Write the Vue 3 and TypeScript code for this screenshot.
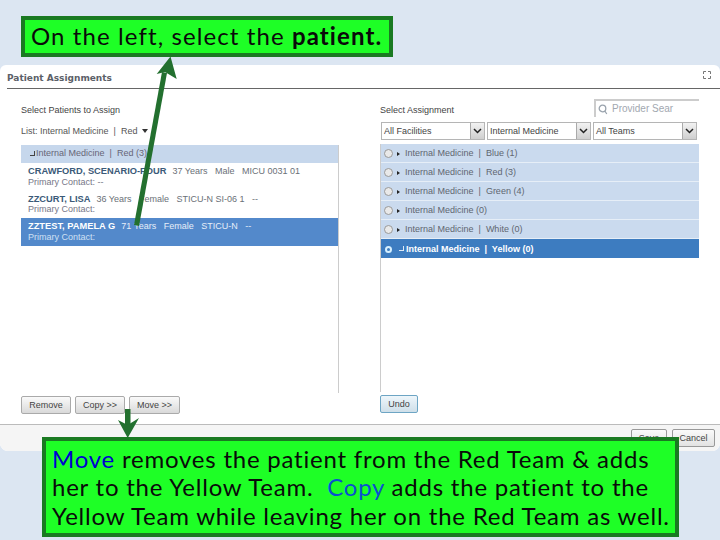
<script setup lang="ts">
const leftRows = [
  { name: 'CRAWFORD, SCENARIO-FOUR', info: '37 Years   Male   MICU 0031 01', contact: 'Primary Contact: --', selected: false },
  { name: 'ZZCURT, LISA', info: '36 Years   Female   STICU-N SI-06 1   --', contact: 'Primary Contact:', selected: false },
  { name: 'ZZTEST, PAMELA G', info: '71 Years   Female   STICU-N   --', contact: 'Primary Contact:', selected: true },
]
const teams = [
  { label: 'Internal Medicine  |  Blue (1)', on: false },
  { label: 'Internal Medicine  |  Red (3)', on: false },
  { label: 'Internal Medicine  |  Green (4)', on: false },
  { label: 'Internal Medicine (0)', on: false },
  { label: 'Internal Medicine  |  White (0)', on: false },
  { label: 'Internal Medicine  |  Yellow (0)', on: true },
]
const selects = ['All Facilities', 'Internal Medicine', 'All Teams']
</script>

<template>
  <div class="slide">
    <section class="dialog">
      <header class="title-bar">
        <h1>Patient Assignments</h1>
        <svg class="expand" width="8" height="8" viewBox="0 0 8 8" fill="none" stroke="#777" stroke-width="1">
          <path d="M.5 3V.5H3M5 .5h2.500V3M7.500 5v2.500H5M3 7.500H.5V5" />
        </svg>
      </header>
      <div class="columns">
        <div class="col left">
          <div class="label-row">Select Patients to Assign</div>
          <div class="list-line">List: Internal Medicine &nbsp;|&nbsp; Red <span class="caret"></span></div>
          <div class="left-list">
            <div class="group-head"><span class="open-mark"></span>Internal Medicine &nbsp;|&nbsp; Red (3)</div>
            <div v-for="r in leftRows" :key="r.name" class="patient" :class="{ selected: r.selected }">
              <div><b>{{ r.name }}</b><span class="info">{{ r.info }}</span></div>
              <div class="contact">{{ r.contact }}</div>
            </div>
          </div>
          <div class="buttons">
            <button>Remove</button>
            <button>Copy &gt;&gt;</button>
            <button>Move &gt;&gt;</button>
          </div>
        </div>
        <div class="col right">
          <div class="label-row search-row">
            <span>Select Assignment</span>
            <div class="search">
              <svg width="10" height="11" viewBox="0 0 10 11" fill="none" stroke="#9aa3ad" stroke-width="1.300">
                <circle cx="4.500" cy="4.500" r="3.300" />
                <path d="M6.800 7l2 3" />
              </svg>
              <span>Provider Sear</span>
            </div>
          </div>
          <div class="selects">
            <div v-for="s in selects" :key="s" class="select">
              <span>{{ s }}</span>
              <i class="chev">
                <svg width="9" height="6" viewBox="0 0 9 6" fill="none" stroke="#222" stroke-width="1.500">
                  <path d="M1 1l3.500 3.500L8 1" />
                </svg>
              </i>
            </div>
          </div>
          <div class="right-list">
            <div v-for="t in teams" :key="t.label" class="team" :class="{ on: t.on }">
              <span class="radio"></span>
              <span :class="t.on ? 'open-mark light' : 'arrow'"></span>
              <span class="team-label">{{ t.label }}</span>
            </div>
          </div>
          <div class="buttons">
            <button class="undo">Undo</button>
          </div>
        </div>
      </div>
      <footer class="foot">
        <button>Save</button>
        <button>Cancel</button>
      </footer>
    </section>

    <div class="callout top">On the left, select the <b>patient.</b></div>
    <div class="callout bottom">
      <span class="move">Move</span> removes the patient from the Red Team &amp; adds<br />
      her to the Yellow Team. &nbsp;<span class="copy">Copy</span> adds the patient to the<br />
      Yellow Team while leaving her on the Red Team as well.
    </div>

    <svg class="arrows" width="720" height="540" viewBox="0 0 720 540">
      <g fill="#23702f">
        <path d="M134 225L162 72l5 1L139 226z" />
        <path d="M170.500 56.500L176.700 79 165 72 156.700 74z" />
        <rect x="125" y="409" width="5.500" height="17" />
        <path d="M127.700 438L118 420 127.700 425 139 418z" />
      </g>
    </svg>
  </div>
</template>

<style>
html, body { margin: 0; background: #dce6f2; }
</style>

<style scoped>
.slide {
  position: relative;
  width: 720px;
  height: 540px;
  padding-top: 65px;
  box-sizing: border-box;
  overflow: hidden;
  background: #dce6f2;
  font-family: "Liberation Sans", sans-serif;
  color: #4a4f55;
}
.dialog {
  height: 386px;
  background: #fff;
  border-radius: 6px 6px 8px 8px;
  display: flex;
  flex-direction: column;
}
.title-bar {
  height: 24px;
  margin-left: 7px;
  border-bottom: 1px solid #666;
  display: flex;
  align-items: center;
  justify-content: space-between;
  padding-right: 9px;
  padding-top: 2px;
  box-sizing: border-box;
}
h1 { margin: 0; font: 700 9px "DejaVu Sans", sans-serif; color: #5b6068; }
.expand { margin-top: -5px; }
.columns {
  flex: 1;
  display: flex;
  padding: 11px 21px 0 21px;
}
.col { display: flex; flex-direction: column; }
.left { width: 359px; }
.right { width: 319px; }
.label-row {
  height: 22px;
  font-size: 9px;
  line-height: 20px;
  color: #444;
}
.list-line {
  height: 23px;
  font-size: 9px;
  line-height: 19px;
  color: #555;
}
.caret {
  display: inline-block;
  margin-left: 2px;
  border: 3px solid transparent;
  border-top: 4px solid #333;
  border-bottom: 0;
  vertical-align: 1px;
}
.left-list {
  width: 318px;
  height: 248px;
  border-right: 1px solid #ccc;
  box-sizing: border-box;
  font-size: 9px;
}
.group-head {
  height: 18px;
  line-height: 17px;
  background: #c6d7ec;
  padding-left: 9px;
  color: #667;
}
.open-mark {
  display: inline-block;
  width: 4px;
  height: 4px;
  margin-right: 1px;
  border-right: 1px solid #444;
  border-bottom: 1px solid #444;
}
.open-mark.light { border-color: #dfe9f5; margin: 0 2px 0 3px; }
.patient {
  height: 27.500px;
  padding: 3px 7px 0;
  box-sizing: border-box;
  line-height: 10.500px;
  white-space: pre;
}
.patient b { color: #3b5a78; font-weight: 700; font-size: 9.300px; }
.info { margin-left: 6px; color: #6a7077; }
.contact { color: #778; }
.patient.selected { background: #5389cb; }
.patient.selected b { color: #fff; }
.patient.selected .info { color: #e6eef8; }
.patient.selected .contact { color: #cfe0f3; }
.buttons { display: flex; gap: 4px; margin-top: 3px; }
button {
  height: 18px;
  padding: 0;
  font: 9px "Liberation Sans", sans-serif;
  color: #444;
  background: linear-gradient(#fafafa, #d9d9d9);
  border: 1px solid #aaa;
  border-radius: 2px;
}
.left .buttons button:nth-child(1) { width: 50px; }
.left .buttons button:nth-child(2) { width: 50px; }
.left .buttons button:nth-child(3) { width: 51px; }
.undo { width: 38px; border-color: #6da5c4; background: linear-gradient(#eef6fb, #cfdfe9); }
.search-row { display: flex; justify-content: space-between; align-items: flex-start; height: 22px; }
.search {
  width: 105px;
  height: 18px;
  margin-top: -1px;
  box-sizing: border-box;
  border-top: 2px solid #ccc;
  border-left: 2px solid #ccc;
  display: flex;
  align-items: center;
  gap: 4px;
  padding-left: 2px;
  font-size: 10px;
  line-height: 14px;
  color: #a2a8b0;
}
.selects { display: flex; gap: 2px; height: 22px; padding-left: 1px; }
.select {
  width: 104px;
  height: 18px;
  box-sizing: border-box;
  border: 1px solid #b5b5b5;
  display: flex;
  justify-content: space-between;
  align-items: center;
  padding-left: 2px;
  font-size: 9px;
  color: #444;
}
.chev {
  width: 13px;
  height: 16px;
  background: linear-gradient(#f2f2f2, #cfcfcf);
  border-left: 1px solid #aaa;
  display: flex;
  align-items: center;
  justify-content: center;
}
.right-list {
  height: 248px;
  border-left: 1px solid #ccc;
  box-sizing: border-box;
  font-size: 9px;
}
.team {
  height: 19px;
  box-sizing: border-box;
  border-bottom: 1px solid #e6eef7;
  background: #cadaee;
  display: flex;
  align-items: center;
  color: #5f6670;
  white-space: pre;
}
.team.on { background: #3d7cc0; border-bottom: 0; color: #fff; font-weight: 700; }
.radio {
  width: 9px;
  height: 9px;
  margin: 1px 3px 0 3px;
  box-sizing: border-box;
  border: 1px solid #999;
  border-radius: 50%;
  background: #e9e9e9;
}
.team.on .radio { width: 7px; height: 7px; margin: 1px 4px 0 4px; border: 2px solid #d6f0ff; background: #3d7cc0; }
.arrow {
  width: 0;
  height: 0;
  margin: 1px 5px 0 1px;
  border-left: 3px solid #222;
  border-top: 2.500px solid transparent;
  border-bottom: 2.500px solid transparent;
}
.foot {
  height: 27px;
  box-sizing: border-box;
  border-top: 1px solid #bbb;
  background: #f5f5f5;
  border-radius: 0 0 8px 8px;
  display: flex;
  justify-content: flex-end;
  gap: 5px;
  padding: 4px 5px 0 0;
}
.foot button { background: linear-gradient(#fafafa, #e2e2e2); border-color: #999; }
.foot button:first-child { width: 36px; }
.foot button:last-child { width: 43px; }

.callout {
  position: absolute;
  box-sizing: border-box;
  background: #1eff26;
  border: 4px solid #1a7a22;
  color: #0a0a0a;
  font-family: "Lato", sans-serif;
}
.top {
  left: 21px;
  top: 16px;
  width: 372px;
  height: 41px;
  padding-left: 6px;
  font-size: 24px;
  line-height: 32px;
  letter-spacing: 1.100px;
  white-space: nowrap;
}
.bottom {
  left: 42px;
  top: 437px;
  width: 637px;
  height: 100px;
  padding: 4px 0 0 6px;
  font-size: 24px;
  line-height: 28.300px;
  letter-spacing: 0.780px;
  white-space: nowrap;
}
.move { color: #0000d0; }
.copy { color: #0a4fd0; }
.arrows { position: absolute; left: 0; top: 0; pointer-events: none; }
</style>
